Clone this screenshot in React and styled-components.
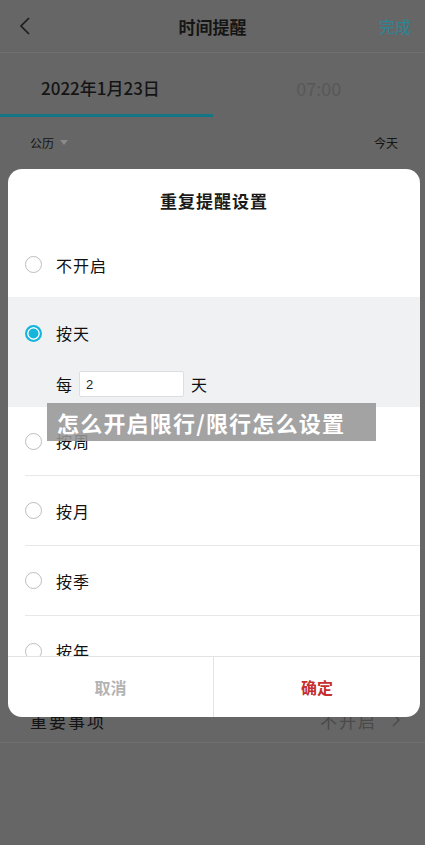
import React from "react";
import styled, { createGlobalStyle } from "styled-components";

const Global = createGlobalStyle`
  html, body { margin: 0; padding: 0; }
  body {
    font-family: "Noto Sans CJK SC", "Noto Sans", sans-serif;
    background: #666;
  }
`;

const Page = styled.div`
  position: relative;
  width: 425px;
  height: 845px;
  overflow: hidden;
  background: #666;
  display: flex;
  flex-direction: column;
`;

const Header = styled.div`
  height: 52px;
  display: grid;
  grid-template-columns: 60px 1fr 60px;
  align-items: center;
  border-bottom: 1px solid #6f6f6f;
`;

const Back = styled.div`
  padding-left: 18px;
  display: flex;
  align-items: center;
`;

const HeaderTitle = styled.div`
  text-align: center;
  font-size: 17px;
  font-weight: 700;
  color: #151515;
`;

const Done = styled.div`
  text-align: right;
  padding-right: 14px;
  font-size: 16px;
  color: #2a8796;
`;

const Tabs = styled.div`
  display: flex;
  height: 64px;
`;

const Tab = styled.div`
  width: 50%;
  display: flex;
  align-items: center;
  justify-content: ${(p) => (p.$active ? "flex-start" : "center")};
  padding: 8px 0 0 ${(p) => (p.$active ? "41px" : "0")};
  box-sizing: border-box;
  font-size: ${(p) => (p.$active ? "17px" : "18px")};
  font-weight: ${(p) => (p.$active ? 500 : 400)};
  color: ${(p) => (p.$active ? "#141414" : "#585858")};
  border-bottom: 3px solid ${(p) => (p.$active ? "#137585" : "transparent")};
`;

const CalRow = styled.div`
  display: flex;
  justify-content: space-between;
  align-items: center;
  height: 50px;
  padding: 0 27px 0 30px;
  font-size: 12px;
  color: #151515;
`;

const Caret = styled.span`
  display: inline-block;
  margin-left: 6px;
  border-left: 4px solid transparent;
  border-right: 4px solid transparent;
  border-top: 5px solid #8a8a8a;
  vertical-align: middle;
  transform: translateY(-2px);
`;

const Spacer = styled.div`
  height: 531px;
`;

const SettingRow = styled.div`
  display: flex;
  justify-content: space-between;
  align-items: center;
  height: 44px;
  padding: 0 24px 0 30px;
  border-bottom: 1px solid #707070;
  font-size: 17px;
  letter-spacing: 2px;
  color: #141414;
`;

const SettingValue = styled.span`
  display: flex;
  align-items: center;
  gap: 14px;
  color: #4a4a4a;
`;

const Modal = styled.div`
  position: absolute;
  top: 169px;
  left: 8px;
  width: 412px;
  height: 548px;
  background: #fff;
  border-radius: 14px;
  overflow: hidden;
  display: flex;
  flex-direction: column;
`;

const ModalTitle = styled.div`
  height: 63px;
  display: flex;
  align-items: center;
  justify-content: center;
  font-size: 17px;
  font-weight: 700;
  color: #1a1a1a;
  letter-spacing: 1px;
`;

const List = styled.div`
  flex: 1;
  overflow: hidden;
`;

const Option = styled.div`
  height: ${(p) => p.$h || 69}px;
  display: flex;
  align-items: center;
  margin-left: ${(p) => (p.$flush ? 0 : 17)}px;
  gap: 14px;
  font-size: 16px;
  color: #111;
  letter-spacing: 1px;
  border-bottom: ${(p) => (p.$line ? "1px solid #e8e8e8" : "none")};
  box-sizing: border-box;
`;

const Selected = styled.div`
  background: #f0f1f3;
  height: 110px;
  padding-left: 17px;
  display: flex;
  flex-direction: column;
`;

const Radio = styled.span`
  width: 17px;
  height: 17px;
  border-radius: 50%;
  box-sizing: border-box;
  flex-shrink: 0;
  border: ${(p) => (p.$on ? "2px solid #15b5dc" : "1.5px solid #bdbdbd")};
  background: ${(p) => (p.$on ? "#15b5dc" : "#fff")};
  box-shadow: ${(p) => (p.$on ? "inset 0 0 0 1.5px #fff" : "none")};
`;

const EveryRow = styled.div`
  display: flex;
  align-items: center;
  gap: 7px;
  padding-left: 31px;
  margin-top: 2px;
  font-size: 16px;
  color: #111;
`;

const NumBox = styled.div`
  width: 105px;
  height: 26px;
  background: #fff;
  border: 1px solid #dedede;
  border-radius: 2px;
  box-sizing: border-box;
  padding-left: 6px;
  display: flex;
  align-items: center;
  font-size: 13px;
  color: #222;
  font-family: "Liberation Sans", sans-serif;
`;

const Footer = styled.div`
  height: 60px;
  display: grid;
  grid-template-columns: 205px 1fr;
  border-top: 1px solid #e3e3e3;
  flex-shrink: 0;
`;

const FootBtn = styled.div`
  display: flex;
  align-items: center;
  justify-content: center;
  font-size: 16px;
  font-weight: 700;
  color: ${(p) => p.$color};
  border-left: ${(p) => (p.$split ? "1px solid #e3e3e3" : "none")};
`;

const Banner = styled.div`
  position: absolute;
  top: 403px;
  left: 47px;
  width: 329px;
  height: 38px;
  background: rgba(150, 150, 150, 0.88);
  display: flex;
  align-items: center;
  padding-left: 10px;
  box-sizing: border-box;
  font-size: 22px;
  font-weight: 700;
  letter-spacing: 1.2px;
  color: #fff;
  white-space: nowrap;
`;

const options = [
  { label: "按周", h: 69 },
  { label: "按月", h: 70 },
  { label: "按季", h: 70 },
  { label: "按年", h: 70 },
];

export default function App() {
  return (
    <>
      <Global />
      <Page>
        <Header>
          <Back>
            <svg width="14" height="20" viewBox="0 0 14 20">
              <path d="M11 2 L3 10 L11 18" fill="none" stroke="#1a1a1a" strokeWidth="1.6" />
            </svg>
          </Back>
          <HeaderTitle>时间提醒</HeaderTitle>
          <Done>完成</Done>
        </Header>
        <Tabs>
          <Tab $active>2022年1月23日</Tab>
          <Tab>07:00</Tab>
        </Tabs>
        <CalRow>
          <span>
            公历<Caret />
          </span>
          <span>今天</span>
        </CalRow>
        <Spacer />
        <SettingRow>
          <span>重要事项</span>
          <SettingValue>
            不开启
            <svg width="10" height="16" viewBox="0 0 10 16">
              <path d="M2 2 L8 8 L2 14" fill="none" stroke="#4a4a4a" strokeWidth="1.4" />
            </svg>
          </SettingValue>
        </SettingRow>

        <Modal>
          <ModalTitle>重复提醒设置</ModalTitle>
          <List>
            <Option $h={65}>
              <Radio />
              不开启
            </Option>
            <Selected>
              <Option $h={72} $flush>
                <Radio $on />
                按天
              </Option>
              <EveryRow>
                每<NumBox>2</NumBox>天
              </EveryRow>
            </Selected>
            {options.map((o, i) => (
              <Option key={o.label} $h={o.h} $line={i < options.length - 1}>
                <Radio />
                {o.label}
              </Option>
            ))}
          </List>
          <Footer>
            <FootBtn $color="#b3b3b3">取消</FootBtn>
            <FootBtn $color="#c4302f" $split>
              确定
            </FootBtn>
          </Footer>
        </Modal>

        <Banner>怎么开启限行/限行怎么设置</Banner>
      </Page>
    </>
  );
}
